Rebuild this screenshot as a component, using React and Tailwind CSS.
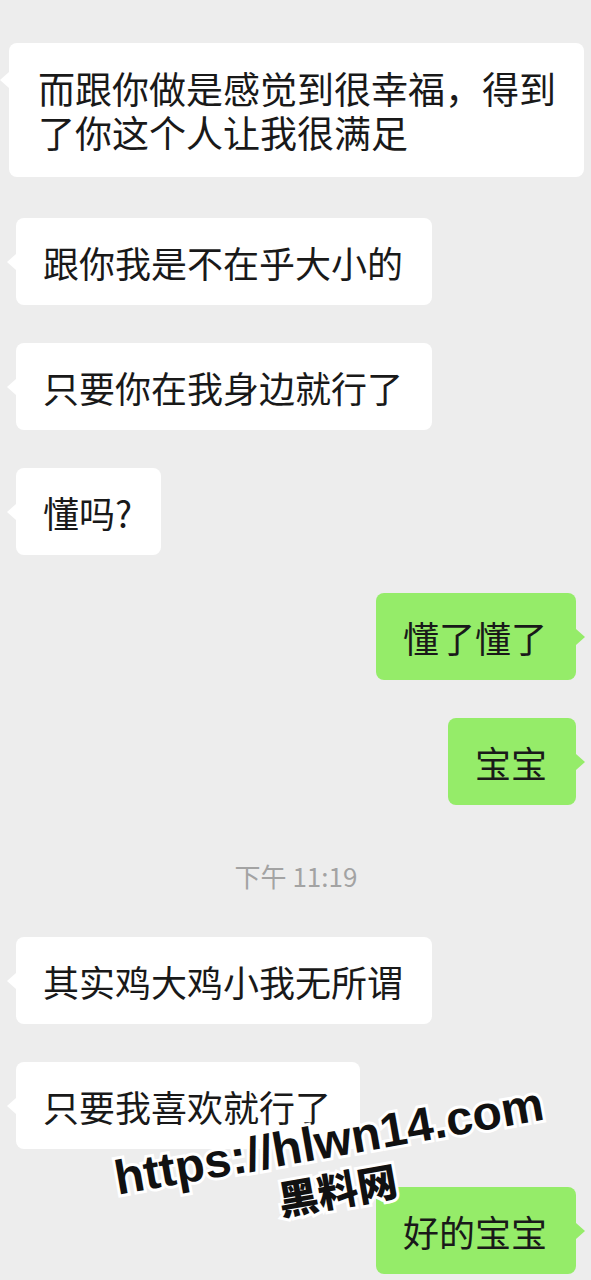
import React from "react";

const cjk = "font-['Noto_Sans_CJK_SC','Noto_Sans',sans-serif]";

function Bubble({ side = "left", className = "", tailTop = "top-[36px]", children }) {
  const mine = side === "right";
  return (
    <div
      className={`relative rounded-[8px] ${mine ? "self-end bg-[#95ec69]" : "self-start bg-white"} ${className}`}
    >
      {mine ? (
        <span
          className={`absolute right-[-9px] ${tailTop} h-0 w-0 border-y-[8px] border-l-[9px] border-y-transparent border-l-[#95ec69]`}
        />
      ) : (
        <span
          className={`absolute left-[-9px] ${tailTop} h-0 w-0 border-y-[8px] border-r-[9px] border-y-transparent border-r-white`}
        />
      )}
      {children}
    </div>
  );
}

export default function App() {
  const msg = "pl-[27px] pr-[29px] py-[21.5px] text-[36px] leading-[44px] text-[#191919] whitespace-nowrap";

  return (
    <div className={`relative h-[1280px] w-[591px] overflow-hidden bg-[#ededed] ${cjk}`}>
      <div className="flex flex-col gap-[38px] pl-[16px] pr-[15px] pt-[43px]">
        {/* first message, slightly larger */}
        <Bubble className="ml-[-7px] w-[575px] mb-[3px]" tailTop="top-[29px]">
          <p className="pl-[29px] pr-[26px] py-[23px] text-[37px] leading-[44px] text-[#191919]">
            而跟你做是感觉到很幸福，得到了你这个人让我很满足
          </p>
        </Bubble>

        <Bubble>
          <p className={msg}>跟你我是不在乎大小的</p>
        </Bubble>
        <Bubble>
          <p className={msg}>只要你在我身边就行了</p>
        </Bubble>
        <Bubble>
          <p className={msg}>懂吗?</p>
        </Bubble>

        <Bubble side="right">
          <p className={msg}>懂了懂了</p>
        </Bubble>
        <Bubble side="right">
          <p className={msg}>宝宝</p>
        </Bubble>

        {/* time divider */}
        <div className="h-[56px] pt-[20px] text-center text-[26px] leading-[26px] text-[#a3a3a3]">
          下午 11:19
        </div>

        <Bubble>
          <p className={msg}>其实鸡大鸡小我无所谓</p>
        </Bubble>
        <Bubble>
          <p className={msg}>只要我喜欢就行了</p>
        </Bubble>
        <Bubble side="right">
          <p className={msg}>好的宝宝</p>
        </Bubble>
      </div>

      {/* WATERMARK */}
      <div className="pointer-events-none absolute left-[333px] top-[1164px] flex -translate-x-1/2 -translate-y-1/2 rotate-[-10deg] flex-col items-center">
        <span className="whitespace-nowrap font-['Liberation_Sans',sans-serif] text-[48px] font-bold leading-[50px] text-[#111] [-webkit-text-stroke:6px_white] [paint-order:stroke_fill]">
          https://hlwn14.com
        </span>
        <span className="whitespace-nowrap font-['Noto_Sans_CJK_SC',sans-serif] text-[40px] font-black leading-[46px] text-[#111] [-webkit-text-stroke:6px_white] [paint-order:stroke_fill]">
          黑料网
        </span>
      </div>
    </div>
  );
}
